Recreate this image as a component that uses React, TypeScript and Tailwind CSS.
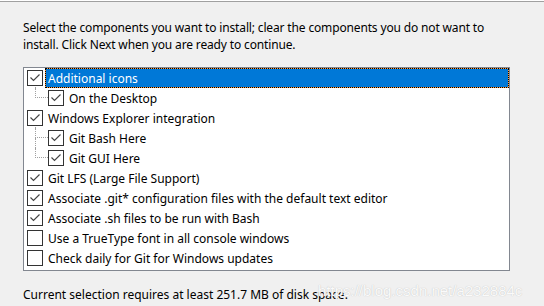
import React from "react";

type Item = {
  label: string;
  checked: boolean;
  level: 0 | 1;
  selected?: boolean;
  hasChildren?: boolean;
  last?: boolean;
};

const items: Item[] = [
  { label: "Additional icons", checked: true, level: 0, selected: true, hasChildren: true },
  { label: "On the Desktop", checked: true, level: 1, last: true },
  { label: "Windows Explorer integration", checked: true, level: 0, hasChildren: true },
  { label: "Git Bash Here", checked: true, level: 1 },
  { label: "Git GUI Here", checked: true, level: 1, last: true },
  { label: "Git LFS (Large File Support)", checked: true, level: 0 },
  { label: "Associate .git* configuration files with the default text editor", checked: true, level: 0 },
  { label: "Associate .sh files to be run with Bash", checked: true, level: 0 },
  { label: "Use a TrueType font in all console windows", checked: false, level: 0 },
  { label: "Check daily for Git for Windows updates", checked: false, level: 0 },
];

const CheckBox = ({ checked }: { checked: boolean }) => (
  <svg width="16" height="16" viewBox="0 0 16 16" className="shrink-0 block">
    <rect x="0.5" y="0.5" width="15" height="15" fill="#fff" stroke="#333" />
    {checked && (
      <path d="M3.5 7.5 L6.5 10.5 L12.5 4.5" fill="none" stroke="#444" strokeWidth="1.2" />
    )}
  </svg>
);

const Row = ({ item }: { item: Item }) => {
  return (
    <div className={`h-[20px] flex items-center ${item.level === 1 ? "pl-[11px]" : "pl-[3px]"}`}>
      {item.level === 1 && (
        <div className="w-[13px] self-stretch flex flex-col">
          <div className="h-[10px] border-l border-b border-dotted border-[#a0a0a0]" />
          <div className={`flex-1 ${item.last ? "" : "border-l border-dotted border-[#a0a0a0]"}`} />
        </div>
      )}
      <div className="relative">
        <CheckBox checked={item.checked} />
        {item.hasChildren && (
          <span className="absolute left-[8px] top-[17px] h-[3px] border-l border-dotted border-[#a0a0a0]" />
        )}
      </div>
      {item.selected ? (
        <div className="ml-[2px] flex-1 h-[20px] bg-[#ff9a3c]">
          <div className="h-full border border-dotted border-black bg-[#0078d7] bg-clip-padding text-white pl-[2px] flex items-center">
            {item.label}
          </div>
        </div>
      ) : (
        <div className="ml-[2px] flex-1 pl-[3px]">{item.label}</div>
      )}
    </div>
  );
};

export default function App() {
  return (
    <div className="relative w-[544px] h-[306px] overflow-hidden bg-[#f0f0f0] text-black text-[12px] leading-[17px] font-['Noto_Sans','Open_Sans',sans-serif]">
      <div className="h-px bg-white" />
      <div className="h-px bg-[#a0a0a0]" />

      <div className="pl-[23px] pt-[17px] tracking-[-0.15px]">
        Select the components you want to install; clear the components you do not want to
        <br />
        install. Click Next when you are ready to continue.
      </div>

      <div className="ml-[23px] mt-[14px] w-[487px] h-[204px] border border-[#828790] bg-white">
        {items.map((item) => (
          <Row key={item.label} item={item} />
        ))}
      </div>

      <p className="pl-[23px] mt-[15px]">Current selection requires at least 251.7 MB of disk space.</p>

      <div className="absolute left-[318px] top-[282px] text-[15px] leading-[18px] font-['Liberation_Sans',sans-serif] text-[#fafafa] [text-shadow:0_0_1px_#b8b8b8]">
        https://blog.csdn.net/a232884c
      </div>
    </div>
  );
}
